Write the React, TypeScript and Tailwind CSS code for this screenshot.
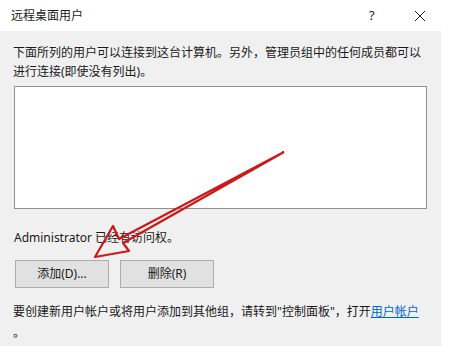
import React from "react";

export default function App() {
  const font = { fontFamily: "'Noto Sans', 'Noto Sans CJK SC', sans-serif" };
  return (
    <div className="relative w-[452px] h-[346px] bg-white overflow-hidden text-[12px] text-[#1a1a1a]" style={font}>
      <div className="w-[441px] h-full flex flex-col">
        <div className="h-[31px] bg-white flex items-center pl-[11px]">
          <span className="flex-1 leading-none">远程桌面用户</span>
          <span className="w-[14px] mr-[31px] text-[13px] leading-none">?</span>
          <svg width="12" height="12" viewBox="0 0 12 12" className="mr-[15px]">
            <path d="M1 1 L11 11 M11 1 L1 11" stroke="#222" strokeWidth="1" />
          </svg>
        </div>
        <div className="flex-1 bg-[#f0f0f0] pl-[13px] pr-[14px] pt-[12px] flex flex-col">
          <p className="leading-[19px]">下面所列的用户可以连接到这台计算机。另外，管理员组中的任何成员都可以进行连接(即使没有列出)。</p>
          <div className="mt-[5px] ml-px h-[123px] bg-white border border-[#8f8f8f]" />
          <p className="mt-[19px] ml-px leading-[19px]">Administrator 已经有访问权。</p>
          <div className="mt-[13px] flex gap-[11px] ml-[2px]">
            <div className="w-[94px] h-[28px] bg-[#e1e1e1] border border-[#adadad] flex items-center justify-center">添加(D)...</div>
            <div className="w-[94px] h-[28px] bg-[#e1e1e1] border border-[#adadad] flex items-center justify-center">删除(R)</div>
          </div>
          <p className="mt-[13px] leading-[21px]">
            要创建新用户帐户或将用户添加到其他组，请转到"控制面板"，打开<span className="text-[#0066cc] underline">用户帐户</span>
            <br />。
          </p>
        </div>
      </div>
      <svg className="absolute left-0 top-0 pointer-events-none" width="452" height="346" viewBox="0 0 452 346">
        <path
          d="M284 152 L119 239 L113 226 L95 257 L129 251 L123 243 L284 152"
          fill="none"
          stroke="#cc1818"
          strokeWidth="2.2"
          strokeLinejoin="round"
        />
      </svg>
    </div>
  );
}
